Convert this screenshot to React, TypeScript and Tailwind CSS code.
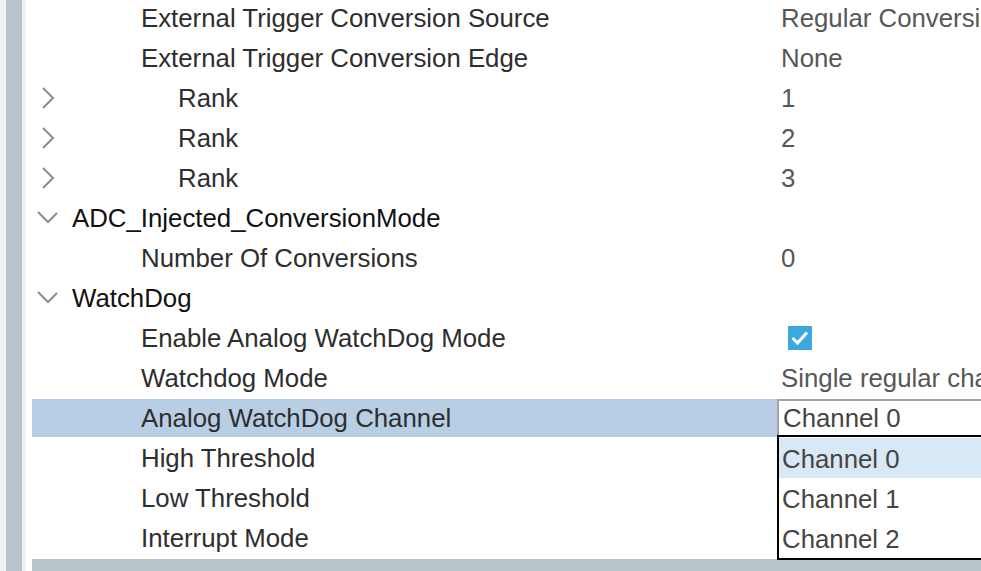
import type { ReactNode } from 'react'

type Row = {
  label: string
  value?: ReactNode
  level: 'group' | 'item' | 'sub'
  chevron?: 'right' | 'down'
  selected?: boolean
}

const font = { fontFamily: '"Liberation Sans", Arial, sans-serif' }

function ChevronRight() {
  return (
    <svg width="14" height="24" viewBox="0 0 14 24" className="shrink-0">
      <path d="M2 2 L12 12 L2 22" fill="none" stroke="#8c8c8c" strokeWidth="2" />
    </svg>
  )
}

function ChevronDown() {
  return (
    <svg width="22" height="14" viewBox="0 0 22 14" className="shrink-0">
      <path d="M1 2 L11 12 L20 3" fill="none" stroke="#8c8c8c" strokeWidth="2" />
    </svg>
  )
}

function Checkbox() {
  return (
    <div className="ml-[7px] w-[24px] h-[24px] bg-[#3ba9dd] flex items-center justify-center">
      <svg width="24" height="24" viewBox="0 0 24 24">
        <path d="M4.5 12 L9.5 17 L19 6.5" fill="none" stroke="white" strokeWidth="3" />
      </svg>
    </div>
  )
}

function ChannelCombo() {
  return (
    <div className="relative h-full">
      <div className="absolute left-0 top-[1px] w-[260px] h-[38px] border-2 border-[#a0a5a9] bg-white flex items-center pl-[4px] text-[#454545]">
        Channel 0
      </div>
      <div className="absolute left-0 top-[37px] w-[260px] border-2 border-black bg-white z-10 text-[#454545]">
        <div className="h-[40px] mt-[1px] flex items-center pl-[3px] pt-[2px] bg-[#d9e8f5]">Channel 0</div>
        <div className="h-[40px] flex items-center pl-[3px] pt-[2px]">Channel 1</div>
        <div className="h-[40px] flex items-center pl-[3px] pt-[2px]">Channel 2</div>
      </div>
    </div>
  )
}

const rows: Row[] = [
  { label: 'External Trigger Conversion Source', value: 'Regular Conversion launched by software', level: 'item' },
  { label: 'External Trigger Conversion Edge', value: 'None', level: 'item' },
  { label: 'Rank', value: '1', level: 'sub', chevron: 'right' },
  { label: 'Rank', value: '2', level: 'sub', chevron: 'right' },
  { label: 'Rank', value: '3', level: 'sub', chevron: 'right' },
  { label: 'ADC_Injected_ConversionMode', level: 'group', chevron: 'down' },
  { label: 'Number Of Conversions', value: '0', level: 'item' },
  { label: 'WatchDog', level: 'group', chevron: 'down' },
  { label: 'Enable Analog WatchDog Mode', value: <Checkbox />, level: 'item' },
  { label: 'Watchdog Mode', value: 'Single regular channel', level: 'item' },
  { label: 'Analog WatchDog Channel', value: <ChannelCombo />, level: 'item', selected: true },
  { label: 'High Threshold', level: 'item' },
  { label: 'Low Threshold', level: 'item' },
  { label: 'Interrupt Mode', level: 'item' },
]

function PropertyRow({ row }: { row: Row }) {
  const indent =
    row.level === 'group' ? 'pl-[40px]' : row.level === 'sub' ? 'pl-[146px]' : 'pl-[109px]'
  return (
    <div className="h-[40px] flex">
      <div className="relative w-[745px] shrink-0 h-full">
        {row.selected && <div className="absolute inset-x-0 top-[1px] bottom-[1px] bg-[#b8cee5]" />}
        {row.chevron === 'right' && (
          <div className="absolute left-[9px] top-[8px]">
            <ChevronRight />
          </div>
        )}
        {row.chevron === 'down' && (
          <div className="absolute left-[5px] top-[12px]">
            <ChevronDown />
          </div>
        )}
        <div
          className={`relative h-full flex items-center whitespace-nowrap ${indent} ${
            row.level === 'group' ? 'text-[#111]' : 'text-[#2e2e2e]'
          }`}
        >
          {row.label}
        </div>
      </div>
      <div className="relative flex-1 h-full flex items-center pl-[4px] text-[#575757] whitespace-nowrap overflow-visible">
        {row.selected ? <div className="absolute inset-0">{row.value}</div> : row.value}
      </div>
    </div>
  )
}

export default function App() {
  return (
    <div className="w-[981px] h-[571px] flex overflow-hidden bg-white text-[25.8px]" style={font}>
      <div className="w-[6px] shrink-0 bg-[#eff1f3]" />
      <div className="w-[16px] shrink-0 bg-[#b8c4ca]" />
      <div className="w-[4px] shrink-0 bg-[#eff1f3]" />
      <div className="w-[6px] shrink-0 bg-white" />
      <div className="flex-1 flex flex-col min-w-0">
        <div className="flex-1 -mt-[2px]">
          {rows.map((row, i) => (
            <PropertyRow key={i} row={row} />
          ))}
        </div>
        <div className="h-[12px] shrink-0 bg-[#b8c4ca]" />
      </div>
    </div>
  )
}
